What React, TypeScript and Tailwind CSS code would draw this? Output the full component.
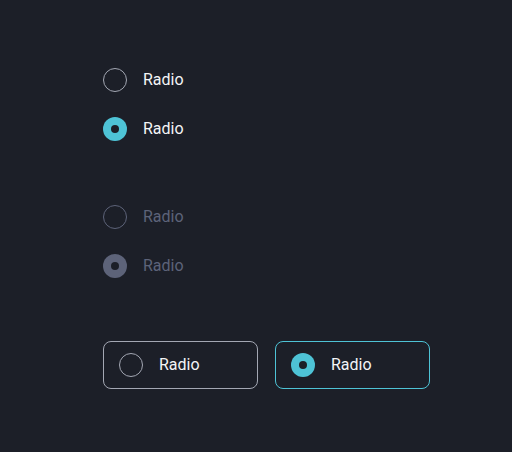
import React from 'react';

interface RadioProps {
  checked?: boolean;
  disabled?: boolean;
}

const RadioDot: React.FC<RadioProps> = ({ checked, disabled }) => {
  if (checked) {
    return (
      <span
        className={`flex h-6 w-6 shrink-0 items-center justify-center rounded-full ${
          disabled ? 'bg-[#5d6379]' : 'bg-[#4ec3d6]'
        }`}
      >
        <span className="h-2 w-2 rounded-full bg-[#1c1f28]" />
      </span>
    );
  }
  return (
    <span
      className={`h-6 w-6 shrink-0 rounded-full border ${
        disabled ? 'border-[#5d6379]' : 'border-[#a3a7b3]'
      }`}
    />
  );
};

const Radio: React.FC<RadioProps> = ({ checked, disabled }) => (
  <label className="flex h-6 items-center gap-4">
    <RadioDot checked={checked} disabled={disabled} />
    <span className={`text-base ${disabled ? 'text-[#5d6379]' : 'text-[#f3f4f6]'}`}>Radio</span>
  </label>
);

const RadioCard: React.FC<RadioProps> = ({ checked }) => (
  <label
    className={`flex h-12 w-[155px] items-center gap-4 rounded-lg border px-[15px] ${
      checked ? 'border-[#4ec3d6]' : 'border-[#a3a7b3]'
    }`}
  >
    <RadioDot checked={checked} />
    <span className="text-base text-[#f3f4f6]">Radio</span>
  </label>
);

export default function App() {
  return (
    <div
      className="flex min-h-[452px] w-[512px] flex-col bg-[#1c1f28] pl-[103px] pt-[68px]"
      style={{ fontFamily: 'Roboto, "Noto Sans", sans-serif' }}
    >
      <div className="flex flex-col gap-[25px]">
        <Radio />
        <Radio checked />
      </div>
      <div className="mt-16 flex flex-col gap-[25px]">
        <Radio disabled />
        <Radio checked disabled />
      </div>
      <div className="mt-[63px] flex gap-[17px]">
        <RadioCard />
        <RadioCard checked />
      </div>
    </div>
  );
}
